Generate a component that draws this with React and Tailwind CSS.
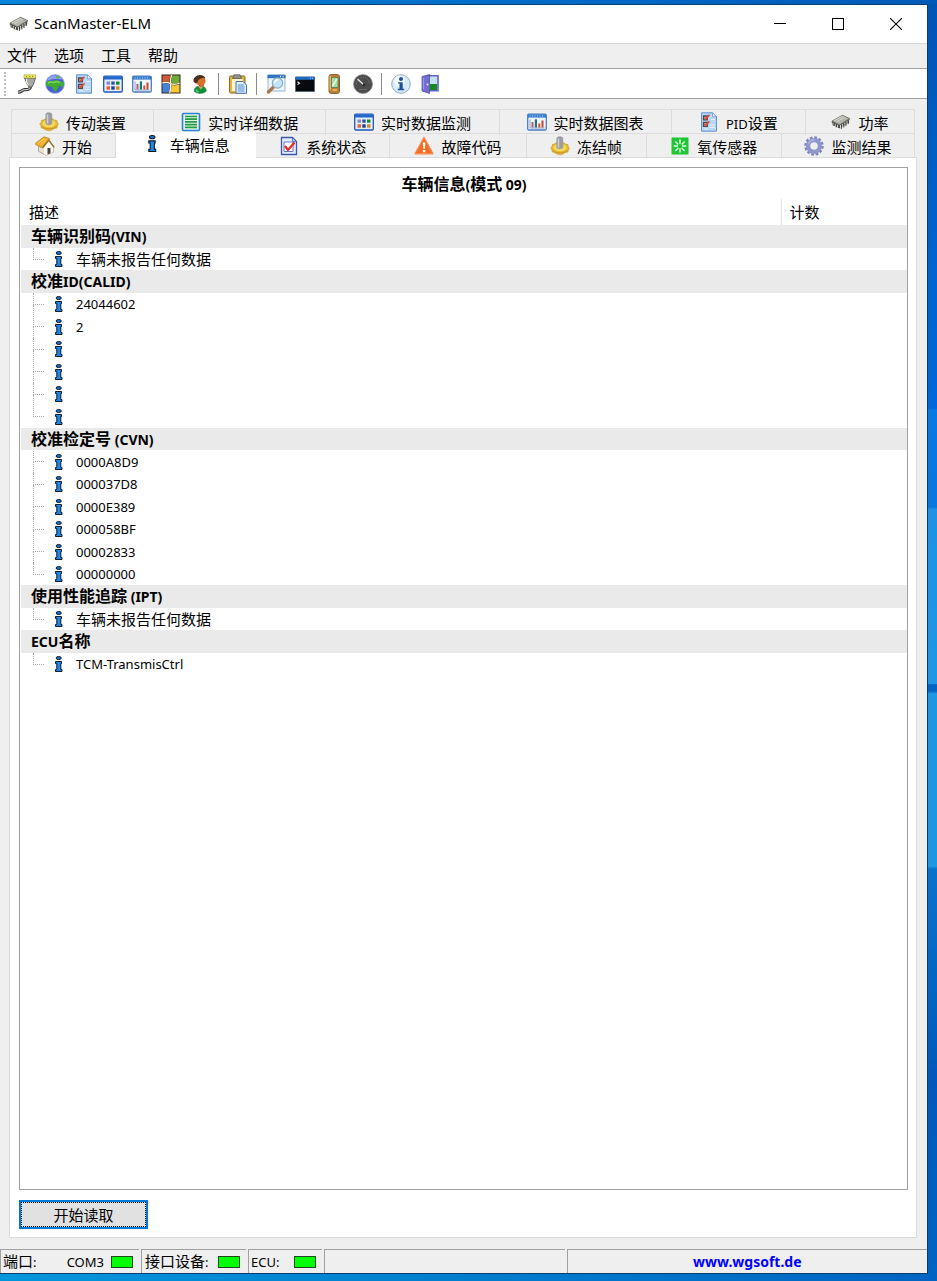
import React from "react";

const CJK = /([\u4e00-\u9fff]+)/;

/* Chinese runs are set a little larger than the Latin runs beside them. */
function Mixed({ children, bold }) {
  const cjk = bold ? "text-[16px]" : "text-[15px]";
  const latin = bold ? "text-[14px]" : "text-[13px]";
  return children
    .split(CJK)
    .filter(Boolean)
    .map((part, i) => (
      <span key={i} className={CJK.test(part) ? cjk : latin}>
        {part}
      </span>
    ));
}

function Svg({ children, className = "h-5 w-5" }) {
  return (
    <svg viewBox="0 0 20 20" className={`${className} shrink-0`} aria-hidden="true">
      {children}
    </svg>
  );
}

const ChipIcon = () => (
  <Svg>
    <path d="M0.500 9.500 11.500 3l7.500 3.500v3L9 16.500 1.500 13z" fill="#5c5c57" />
    <path d="M1 9 11.500 3.200 18.500 6.500 8.500 12.800z" fill="#b4b5ac" stroke="#6b6b66" strokeWidth=".6" />
    <path d="M3 8.800 11.500 4.200M5.500 9.800 13.500 5.200" stroke="#d4d5ce" strokeWidth="1" />
    <path d="M9.500 13v3.500M11.700 12v3.500M13.900 10.500v3.500M16 9v3.500M18.500 7.500v3M2 11v2.500M4.200 12v2.500M6.500 13v2.500" stroke="#dcdcd8" strokeWidth="1" />
    <path d="M10.500 13v3.800M12.800 12v3.500M15 10.500v3.500M17.300 9v3M3 11.500v2.500M5.400 12.500v2.800M7.800 13.500v2.500" stroke="#33332f" strokeWidth=".9" />
  </Svg>
);
const PlugIcon = () => (
  <Svg>
    <path d="M14.500 12.500c-.5 3.500-3 3-6 3.200-2.500.2-3 2.300-6.500 2.600" fill="none" stroke="#333" strokeWidth="3.200" />
    <path d="M14.500 12.500c-.5 3.500-3 3-6 3.200-2.500.2-3 2.300-6.500 2.600" fill="none" stroke="#c4c4c4" strokeWidth="1.300" />
    <path d="M8.500 4h11l-2 6-1.500 3h-3l-2-3z" fill="#a8a8a4" stroke="#4b4b48" strokeWidth=".8" />
    <path d="M10.500 5v3l2 3" stroke="#eee" fill="none" strokeWidth="1.200" />
    <path d="M8 .8h11.500V4H8z" fill="#eeea5c" stroke="#a5a43c" strokeWidth=".6" />
    <path d="M10 2.500h1.200M13 2.500h1.200M16 2.500h1.200" stroke="#8d8c34" />
  </Svg>
);
const GlobeIcon = () => (
  <Svg>
    <circle cx="10" cy="10" r="9.400" fill="#4a5fd6" stroke="#a3ade8" strokeWidth=".8" />
    <path d="M1.500 7C3.500 3 6 1.300 10 1.200 13 1.200 16 2.500 17.500 5.500c-5-1-11-1-16 1.500z" fill="#8ea2ef" />
    <path d="M1 8.500c1.500-1.500 4-2 6.500-1.500 2-1.500 5-1.500 6.500 0 2 .2 3.500.5 4.700 1.500.3 2-.2 4-1.700 5.500-.5-1.500-1.500-2.500-3-2.500-.5 2.500-2 4-3.500 6.500-2-1-2-3-3-4.500C6 12 3.500 12.500 2 12 1.200 11 1 9.500 1 8.500z" fill="#3fae2c" />
    <path d="M3 9c2-1.200 4-1.200 6-.5 2-1 4-.8 6 .2" fill="none" stroke="#7ed35c" strokeWidth="1.500" />
    <path d="M10.500 2c1.500-.5 3.500 0 4.500 1.500l-2.500 1.500z" fill="#53bb3c" />
  </Svg>
);
const ChecklistIcon = () => (
  <Svg>
    <path d="M2.500.8h11l4 4v14.400h-15z" fill="#b7d7f7" stroke="#6292d0" />
    <path d="M13.500.8v4h4z" fill="#eef6ff" stroke="#6292d0" strokeWidth=".7" />
    <path d="M10.500 13h5.500M10.500 15.500h5.500M5 17h4M12 7.500h4" stroke="#e4f1ff" strokeWidth="1.200" />
    <path d="M4.500 4h3.800v3.800H4.500zM4.500 10.500h3.800v3.800H4.500z" fill="#c9b9b9" stroke="#4f484b" strokeWidth="1.300" />
    <path d="m5.500 5.500 1.600 1.500L10.500 2.800M5.500 12l1.600 1.500 3.400-4.200" fill="none" stroke="#e2492f" strokeWidth="1.500" />
  </Svg>
);
const GridIcon = () => (
  <Svg>
    <rect x=".7" y="2.200" width="18.600" height="15.800" rx="1.200" fill="#e8eef9" stroke="#1d57b5" strokeWidth="1.300" />
    <path d="M.8 2.500h18.400V5.500H.8z" fill="#2168cf" />
    <path d="M3.500 7.500H7v3.200H3.500z" fill="#8c87c9" />
    <path d="M8.300 7.500h3.400v3.200H8.300z" fill="#2453ad" />
    <path d="M13 7.500h3.500v3.200H13z" fill="#148a20" />
    <path d="M3.500 12.300H7v3.400H3.500z" fill="#ea5f35" />
    <path d="M8.300 12.300h3.400v3.400H8.300z" fill="#183f9c" />
    <path d="M13 12.300h3.500v3.400H13z" fill="#d58921" />
  </Svg>
);
const ChartIcon = () => (
  <Svg>
    <rect x=".7" y="2.200" width="18.600" height="15.800" rx="1.200" fill="#f1f6fd" stroke="#4c7dbd" strokeWidth="1.300" />
    <path d="M.8 2.300h18.400V5.600H.8z" fill="#387bcb" />
    <path d="M2.500 4h1M5 4h1M7.500 4h1M10 4h1M12.500 4h1M15 4h1" stroke="#bfe0ff" />
    <path d="M3 7.500v8.500h14.500" fill="none" stroke="#8ca6c7" />
    <path d="M4.500 10h2v5.500h-2z" fill="#b95a78" />
    <path d="M7.800 7.300H10v8.200H7.800z" fill="#177a72" />
    <path d="M11.300 11.500h2v4h-2z" fill="#d1512e" />
    <path d="M14.500 8.500h2v7h-2z" fill="#c24a2e" />
  </Svg>
);
const PuzzleIcon = () => (
  <Svg>
    <rect x=".5" y=".5" width="19" height="19" fill="#30261c" />
    <path d="M1.500 1.500h8.200c-1.200 2.500-1.200 4.500-1 7-2.500-1.300-5-1.300-7.200-.2z" fill="#cf5a35" />
    <path d="M11.300 1.500h7.200v7c-2.500 1.300-5.500 1.500-8 .5-.3-2.500 0-5 .8-7.500z" fill="#6dab38" />
    <path d="M1.500 10c2.500-1.300 5-1 7.200.2.500 2.500.2 5.500-.7 8.300H1.500z" fill="#4384da" />
    <path d="M10.400 10.800c2.500 1 5.500.8 8.100-.5v8.200h-9c.9-2.700 1.200-5 .9-7.700z" fill="#f7c832" />
    <path d="M10.600 1C9 5.500 9.300 8 9.600 10c.4 3 .2 5.500-.9 9M1.200 9.200c3-1.400 5.500-1 8.300.4 3 1.200 6.500.8 9.300-.6" fill="none" stroke="#fff3d8" strokeWidth="1.300" />
  </Svg>
);
const PersonIcon = () => (
  <Svg>
    <path d="M4.500 17.500c-.5-3.500 1.500-5 5.500-5.500 4 0 6 1.500 6.300 5-2.500 3-9 3-11.800.5z" fill="#149238" stroke="#0e6428" strokeWidth=".6" />
    <path d="m8 12 3 3.500 2.500-3.800z" fill="#e9a15d" />
    <circle cx="10.800" cy="7" r="4.800" fill="#d8702a" />
    <path d="M6.500 9.500C3 9 2.500 5 5 3.200c2.500-3 8.500-3 10.500 1-2.500-.7-5-.2-6.500 1.300-1.500 1-1 3-2.500 4z" fill="#4b3020" />
    <path d="M9 11.300c1.500 1.300 3.500 1 4.800-.3" stroke="#8d3f18" fill="none" />
    <path d="M6.500 15.500c0 1.500.8 2.300 2.200 2.500" stroke="#5fdc77" fill="none" strokeWidth="1.200" />
  </Svg>
);
const ClipboardIcon = () => (
  <Svg>
    <rect x="1.500" y="2" width="15.500" height="17" rx="1.200" fill="#e5b643" stroke="#8b661d" />
    <path d="M4 5h10.500v12H4z" fill="#fff4cc" />
    <path d="M6 .8h6l1.500 3.700h-9z" fill="#8f928f" stroke="#555" strokeWidth=".7" />
    <path d="M8 7.500h7l3.500 3.500v8.300H8z" fill="#e3effd" stroke="#3e70b5" />
    <path d="M9.800 11h6M9.800 13h6.700M9.800 15h6.700M9.800 17h6.700" stroke="#4c89d3" />
  </Svg>
);
const SearchWindowIcon = () => (
  <Svg>
    <path d="M2 1h17v16H2z" fill="#edf6ff" stroke="#92b4d6" />
    <path d="M1.500.8h18v3.400h-18z" fill="#2d72c5" />
    <path d="M14 2.500h1M16.500 2.500h1" stroke="#fff" strokeWidth="1.500" />
    <path d="m8 12.500-5.500 5.500" stroke="#a87948" strokeWidth="3.200" strokeLinecap="round" />
    <circle cx="11.500" cy="9" r="5.200" fill="#c2e4f8" stroke="#93a9b8" strokeWidth="1.200" />
    <path d="M8.500 8.500c.5-2 2-2.800 4-2.800" stroke="#fff" fill="none" strokeWidth="1.200" />
  </Svg>
);
const TerminalIcon = () => (
  <Svg>
    <path d="M.5 3h19v14.500H.5z" fill="#070a0e" stroke="#4a607c" strokeWidth=".8" />
    <path d="M.5 2.800h19v3H.5z" fill="#216bbe" />
    <path d="M15 4.300h1M17 4.300h1" stroke="#a9d2ff" />
    <path d="m2.500 7.800 2 1.400-2 1.400" fill="none" stroke="#eee" strokeWidth="1.100" />
  </Svg>
);
const DeviceIcon = () => (
  <Svg>
    <rect x="5" y=".6" width="10.500" height="18.800" rx="2.200" fill="#bb7f37" stroke="#8a5c2a" />
    <path d="M6.200 2v14" stroke="#f2c77b" strokeWidth="1.200" />
    <path d="M7.500 3.500H14v10H7.500z" fill="#a7dca9" stroke="#427649" strokeWidth=".7" />
    <path d="m8.500 12 4.500-7" stroke="#e6ffe6" strokeWidth="1.500" />
    <path d="M8.500 16h4.500" stroke="#f1be71" strokeWidth="1.500" />
  </Svg>
);
const GaugeIcon = () => (
  <Svg>
    <circle cx="10" cy="10" r="9.500" fill="#4c4c4c" stroke="#8f8f8f" strokeWidth=".7" />
    <path d="M3.500 10a6.500 6.500 0 0 1 13 0" fill="none" stroke="#8a8a8a" strokeDasharray="1 1.500" />
    <path d="m4.500 5 6.500 6" stroke="#ededed" strokeWidth="1.300" />
    <circle cx="11" cy="11" r="1.400" fill="#2c2c2c" />
    <path d="M6 15.500h8" stroke="#6c6c6c" />
  </Svg>
);
const AboutIcon = () => (
  <Svg>
    <circle cx="10" cy="10" r="9.300" fill="#d7ebf8" stroke="#8fabc4" />
    <circle cx="8.500" cy="7" r="5.500" fill="#f5fcff" />
    <circle cx="10" cy="5" r="2" fill="#1e4aa2" />
    <path d="M7 8.200h4.700v6.600H13.200v1.400H6.800v-1.400h1.700V9.600H7z" fill="#1e4aa2" />
  </Svg>
);
const ExitIcon = () => (
  <Svg>
    <path d="M7 1.800h11v15H7z" fill="#c3def5" stroke="#6363c4" strokeWidth="1.600" />
    <path d="M10 10h7v6h-7z" fill="#178827" />
    <path d="M2 2.500 9.500.5v19L2 17z" fill="#746dd0" stroke="#4c469e" strokeWidth=".7" />
    <path d="M3.500 4v11" stroke="#9c97e1" strokeWidth="1.200" />
    <circle cx="7.500" cy="10.500" r="1" fill="#e2dfff" />
  </Svg>
);
const KnobIcon = () => (
  <Svg>
    <path d="M2.500 8.500 5 7.800 7 6.500h6l2.500 1.500 2.500.7.3 2 1.200 1.500-1.300 1.800-.3 2-2.700.5L13 18l-2.800.8L7 18l-2.500-1.300-2.300-.9-.2-2L.7 12l1.300-1.500z" fill="#e6ba34" stroke="#c79a28" strokeWidth=".7" />
    <ellipse cx="10" cy="11.500" rx="6.500" ry="3.800" fill="#f4d860" />
    <path d="M2.500 14.500c3.500 3 11.500 3 15 0" fill="none" stroke="#c9962a" strokeWidth="1" />
    <path d="M6.800 2.300c0-2 6-2 6 0v9c0 1.800-6 1.800-6 0z" fill="#9c9da3" stroke="#85868b" strokeWidth=".5" />
    <path d="M8.500 2.500v9" stroke="#cfd0d4" strokeWidth="1.500" />
  </Svg>
);
const LinesIcon = () => (
  <Svg>
    <rect x="1.500" y="1.500" width="17" height="17" rx="1" fill="#e3f4e7" stroke="#2a83d6" strokeWidth="1.600" />
    <path d="M4 4.500h12M4 7.200h12M4 9.900h12M4 12.600h12M4 15.300h12" stroke="#269b45" strokeWidth="1.700" />
  </Svg>
);
const HomeIcon = () => (
  <Svg>
    <path d="M3.500 9.500 9 8l4.500-4 5 6.500V16L11 19.300l-7.500-4z" fill="#e9e2cf" stroke="#9c917d" strokeWidth=".7" />
    <path d="M9 11.500 13.800 6l4.500 5V16L11 19.200 9 18z" fill="#fffdf6" />
    <path d="M.6 8.500.8 7 9 .8l5.700 1.700L8 10.500l-2 1z" fill="#f0ae28" stroke="#b87c18" strokeWidth=".7" />
    <path d="m7.500 12 6.300-8 5.500 7.500" fill="none" stroke="#97712f" strokeWidth="1.300" />
    <path d="M12.500 12h3v5.200l-3 1.300z" fill="#4b4035" />
    <path d="m3 7.300 6.200-4.800M5.500 8.800 11.500 3" stroke="#ffd76a" strokeWidth="1" />
  </Svg>
);
const StatusIcon = () => (
  <Svg>
    <path d="M2.500 1.500h11l4 4v13h-15z" fill="#e3ecfc" stroke="#3f54ad" strokeWidth="1.300" />
    <path d="M13.500 1.500v4h4z" fill="#a5bff1" stroke="#3f54ad" strokeWidth=".7" />
    <path d="M5 6h9v9.500H5z" fill="#fff" stroke="#6279bd" />
    <path d="m6 10 3 4L15.500 6.500" fill="none" stroke="#e32c25" strokeWidth="2.300" />
  </Svg>
);
const WarningIcon = () => (
  <Svg>
    <path d="M10 1.200 19 17.800H1z" fill="#f46b23" stroke="#f68b4e" strokeWidth="1.200" strokeLinejoin="round" />
    <path d="M8.800 6.500h2.600l-.5 6.300H9.300zM8.900 14h2.400v2.200H8.900z" fill="#fff" />
  </Svg>
);
const SensorIcon = () => (
  <Svg>
    <rect x="1.500" y="1.500" width="17" height="17" rx="1" fill="#1fc535" stroke="#7fdc88" strokeWidth=".8" />
    <path d="M10 3.500v4.200M10 12.300v4.200M3.800 10H8M12 10h4.200M5.300 5.500l3 3M11.700 12l3 3M14.700 5.500l-3 3M8.300 12l-3 3" stroke="#dfffe0" strokeWidth="1.500" />
  </Svg>
);
const GearIcon = () => (
  <Svg>
    <circle cx="10" cy="10" r="8.500" fill="none" stroke="#7a80b8" strokeWidth="2.400" strokeDasharray="2.670 1.780" />
    <circle cx="10" cy="10" r="5.900" fill="none" stroke="#8f96cc" strokeWidth="4.200" />
    <path d="M4.500 8a6 6 0 0 1 6.500-4" fill="none" stroke="#b4b9e2" strokeWidth="1.200" />
  </Svg>
);
const InfoGlyph = ({ className = "h-4 w-[10px]" }) => (
  <svg viewBox="0 0 10 16" className={`${className} shrink-0`} aria-hidden="true">
    <ellipse cx="4.700" cy="2" rx="2.600" ry="1.500" fill="#1674cf" stroke="#101820" strokeWidth="1" />
    <path d="M1.500 5.500h6v2H6.800v6h1.200v2H1.500v-2h1.300v-6H1.500z" fill="#1c87ea" stroke="#101820" strokeWidth="1" />
  </svg>
);
const TabInfoIcon = () => (
  <span className="flex w-5 justify-center">
    <InfoGlyph className="h-[17px] w-[11px]" />
  </span>
);

const TOOL_GROUPS = [
  [
    ["连接", PlugIcon],
    ["网络", GlobeIcon],
    ["PID设置", ChecklistIcon],
    ["实时数据监测", GridIcon],
    ["实时数据图表", ChartIcon],
    ["选项", PuzzleIcon],
    ["用户", PersonIcon],
  ],
  [["剪贴板", ClipboardIcon]],
  [
    ["查找", SearchWindowIcon],
    ["终端", TerminalIcon],
    ["设备", DeviceIcon],
    ["仪表", GaugeIcon],
  ],
  [
    ["关于", AboutIcon],
    ["退出", ExitIcon],
  ],
];

const BACK_TABS = [
  ["传动装置", KnobIcon],
  ["实时详细数据", LinesIcon],
  ["实时数据监测", GridIcon],
  ["实时数据图表", ChartIcon],
  ["PID设置", ChecklistIcon],
  ["功率", ChipIcon],
];
const FRONT_TABS = [
  ["开始", HomeIcon],
  ["车辆信息", TabInfoIcon],
  ["系统状态", StatusIcon],
  ["故障代码", WarningIcon],
  ["冻结帧", KnobIcon],
  ["氧传感器", SensorIcon],
  ["监测结果", GearIcon],
];

const GROUPS = [
  ["车辆识别码(VIN)", ["车辆未报告任何数据"]],
  ["校准ID(CALID)", ["24044602", "2", "", "", "", ""]],
  ["校准检定号 (CVN)", ["0000A8D9", "000037D8", "0000E389", "000058BF", "00002833", "00000000"]],
  ["使用性能追踪 (IPT)", ["车辆未报告任何数据"]],
  ["ECU名称", ["TCM-TransmisCtrl"]],
];

const ROWS = GROUPS.flatMap(([title, items]) => [
  { title },
  ...items.map((text, i) => ({ text, last: i === items.length - 1 })),
]);

function Tab({ label, Icon, selected }) {
  return (
    <button
      role="tab"
      aria-selected={selected}
      className={
        selected
          ? "relative z-10 -mt-px -mb-px flex items-center justify-center gap-[7px] bg-white pb-[2px]"
          : "flex items-center justify-center gap-[7px] border-t border-r border-[#dcdcdc] pt-[2px]"
      }
    >
      <span className="flex pb-[3px]">
        <Icon />
      </span>
      <span className="whitespace-nowrap">
        <Mixed>{label}</Mixed>
      </span>
    </button>
  );
}

function Led() {
  return <span className="h-3 w-[22px] shrink-0 border border-[#1c4a1c] bg-[#00ff00]" />;
}

function TreeBranch({ last }) {
  return (
    <span className="flex w-[11px] flex-col self-stretch">
      <span className="flex-1 border-b border-l border-dotted border-[#a8a8a8]" />
      <span className={last ? "flex-1" : "flex-1 border-l border-dotted border-[#a8a8a8]"} />
    </span>
  );
}

export default function App() {
  return (
    <div className="flex min-h-screen flex-col font-['Noto_Sans','Noto_Sans_CJK_SC',sans-serif] text-[13px] leading-5 text-black">
      <div className="h-1 bg-linear-to-r from-[#0084dc] to-[#0059b8]" />
      <div className="flex flex-1">
        <main className="flex min-w-0 flex-1 flex-col border-t border-r border-b border-[#0b3d68] bg-[#efefef]">
          <header className="flex h-[38px] items-center bg-white pr-[2px] pl-[9px]">
            <ChipIcon />
            <h1 className="ml-[5px] flex-1 pb-[2px] text-[15px]">ScanMaster-ELM</h1>
            <div className="flex self-stretch">
              <button aria-label="最小化" className="flex w-[58px] items-center justify-center">
                <svg viewBox="0 0 12 12" className="h-3 w-3" shapeRendering="crispEdges">
                  <path d="M0 5.500h12" stroke="#000" />
                </svg>
              </button>
              <button aria-label="最大化" className="flex w-[58px] items-center justify-center">
                <svg viewBox="0 0 12 12" className="h-3 w-3" shapeRendering="crispEdges">
                  <path d="M.5.5h11v11H.5z" fill="none" stroke="#000" />
                </svg>
              </button>
              <button aria-label="关闭" className="flex w-[58px] items-center justify-center">
                <svg viewBox="0 0 12 12" className="h-3 w-3">
                  <path d="m0 0 12 12M12 0 0 12" stroke="#000" strokeWidth="1.100" />
                </svg>
              </button>
            </div>
          </header>

          <nav className="flex h-[25px] items-center gap-[17px] border-t border-[#d6d6d6] pb-[3px] pl-[7px] text-[15px]">
            {["文件", "选项", "工具", "帮助"].map((m) => (
              <button key={m}>{m}</button>
            ))}
          </nav>

          <div role="toolbar" className="flex h-[31px] items-center border-t border-b border-[#a0a0a0] bg-white pl-1">
            <span className="mr-[10px] h-6 border-l-2 border-dotted border-[#bdbdbd]" />
            {TOOL_GROUPS.map((group, g) => (
              <React.Fragment key={g}>
                {g > 0 && <span className="mr-[9px] ml-2 h-[22px] w-px bg-[#8c8c8c]" />}
                <div className="flex gap-[9px]">
                  {group.map(([label, Icon]) => (
                    <button key={label} aria-label={label}>
                      <Icon />
                    </button>
                  ))}
                </div>
              </React.Fragment>
            ))}
          </div>

          <section className="flex flex-1 flex-col pt-[10px] pr-[10px] pb-[11px] pl-[9px]">
            <div role="tablist" className="mr-[2px] ml-[2px] border-l border-[#dcdcdc]">
              <div className="grid h-6 grid-cols-[142fr_172fr_173fr_172fr_134fr_109fr]">
                {BACK_TABS.map(([label, Icon]) => (
                  <Tab key={label} label={label} Icon={Icon} selected={false} />
                ))}
              </div>
              <div className="grid h-6 grid-cols-[104fr_140fr_134fr_136fr_120fr_135fr_133fr]">
                {FRONT_TABS.map(([label, Icon]) => (
                  <Tab key={label} label={label} Icon={Icon} selected={label === "车辆信息"} />
                ))}
              </div>
            </div>

            <div role="tabpanel" className="flex flex-1 flex-col border border-[#dcdcdc] bg-white px-[9px] pt-[9px] pb-2 pr-2">
              <div className="flex-1 border border-[#a0a0a0] pl-px">
                <h2 className="pt-[6px] pb-1 text-center leading-5 font-bold">
                  <Mixed bold>车辆信息(模式 09)</Mixed>
                </h2>
                <table className="w-full table-fixed border-collapse text-left">
                  <colgroup>
                    <col />
                    <col className="w-[126px]" />
                  </colgroup>
                  <thead>
                    <tr className="h-[26px] text-[15px]">
                      <th scope="col" className="p-0 pl-2 font-normal">描述</th>
                      <th scope="col" className="border-l border-[#e0e0e0] p-0 pl-2 font-normal">计数</th>
                    </tr>
                  </thead>
                  <tbody>
                    {ROWS.map((row, i) =>
                      row.title ? (
                        <tr key={i} className="bg-[#eaeaea] odd:h-[23px] even:h-[22px]">
                          <th scope="rowgroup" colSpan={2} className="p-0 pl-[10px] leading-5 font-bold">
                            <Mixed bold>{row.title}</Mixed>
                          </th>
                        </tr>
                      ) : (
                        <tr key={i} className="odd:h-[23px] even:h-[22px]">
                          <td colSpan={2} className="p-0">
                            <div className="flex h-[22px] items-center pl-3">
                              <TreeBranch last={row.last} />
                              <span className="mr-3 ml-[10px] flex">
                                <InfoGlyph />
                              </span>
                              <span>
                                <Mixed>{row.text}</Mixed>
                              </span>
                            </div>
                          </td>
                        </tr>
                      ),
                    )}
                  </tbody>
                </table>
              </div>
              <div className="mt-[10px]">
                <button className="flex h-[29px] w-[129px] border-2 border-[#0078d7] bg-[#e1e1e1]">
                  <span className="flex flex-1 items-center justify-center self-stretch border border-dotted border-black text-[15px]">
                    开始读取
                  </span>
                </button>
              </div>
            </div>
          </section>

          <footer className="flex h-6 gap-[2px] text-[13px] *:flex *:items-center *:border-t *:border-l *:border-[#a0a0a0]">
            <div className="w-[139px] pl-[2px]">
              <span className="flex-1"><Mixed>端口:</Mixed></span>
              <span className="mr-[7px]">COM3</span>
              <span className="mr-[6px] flex"><Led /></span>
            </div>
            <div className="w-[105px] justify-between pr-[6px] pl-[3px]">
              <span><Mixed>接口设备:</Mixed></span>
              <Led />
            </div>
            <div className="w-[74px] justify-between pr-[6px] pl-[2px]">
              <span>ECU:</span>
              <Led />
            </div>
            <div className="flex-[2]" />
            <div className="flex-[3] justify-center">
              <a href="http://www.wgsoft.de" className="text-[14px] font-bold text-[#0000ff]">www.wgsoft.de</a>
            </div>
          </footer>
        </main>
        <div className="w-[9px] bg-[linear-gradient(to_bottom,#0055b4_0%,#0064cc_20%,#0068d8_31.800%,#0a7ae2_32%,#0878dc_39.600%,#1f92e3_39.800%,#2196e4_53.500%,#0464c2_53.600%,#0464c2_54.100%,#2095e2_54.300%,#2096e2_67.900%,#0b72cc_68.100%,#0059b8_85%,#0064c2_100%)]" />
      </div>
      <div className="h-[7px] bg-linear-to-r from-[#0096dc] to-[#0064c2]" />
    </div>
  );
}
